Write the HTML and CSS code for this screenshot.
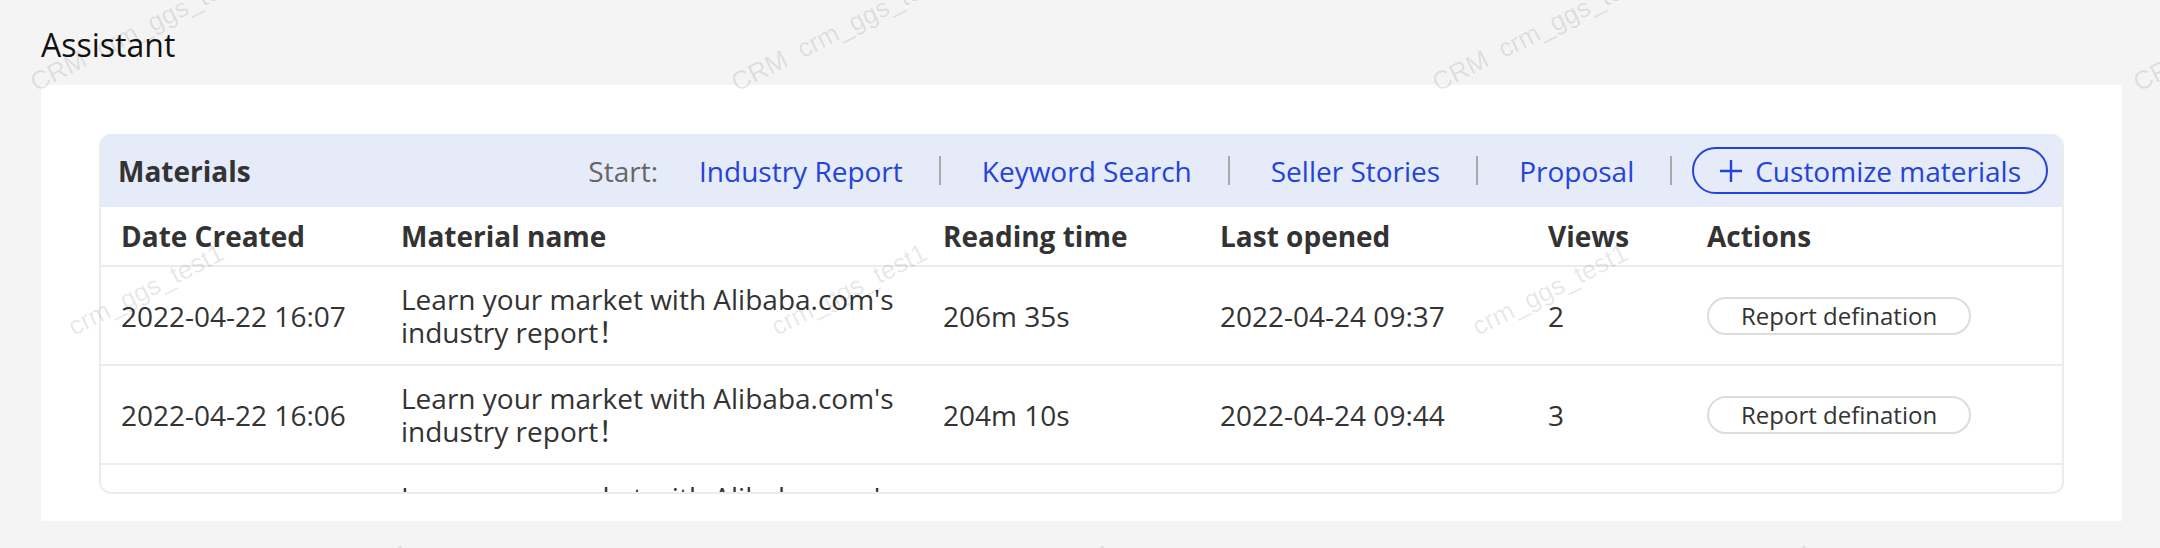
FILE: index.html
```html
<!DOCTYPE html>
<html lang="en">
<head>
  <meta charset="UTF-8">
  <meta name="viewport" content="width=device-width, initial-scale=1.0">
  <title>Assistant</title>
  <link rel="stylesheet" href="styles.css">
</head>
<body>
  <div class="page">
    <h1 class="title">Assistant</h1>

    <div class="card">
      <div class="panel">
        <div class="panel-head">
          <span class="panel-name">Materials</span>
          <div class="starts">
            <span class="start">Start:</span>
            <a class="link">Industry Report</a>
            <span class="sep"></span>
            <a class="link">Keyword Search</a>
            <span class="sep"></span>
            <a class="link">Seller Stories</a>
            <span class="sep"></span>
            <a class="link">Proposal</a>
            <span class="sep last"></span>
            <button class="custom">
              <svg width="24" height="24" viewBox="0 0 24 24"><path d="M12 1v22M1 12h22" stroke="currentColor" stroke-width="2.4" fill="none"/></svg>
              Customize materials
            </button>
          </div>
        </div>

        <table class="list">
          <colgroup>
            <col style="width:278px">
            <col style="width:542px">
            <col style="width:277px">
            <col style="width:328px">
            <col style="width:159px">
            <col>
          </colgroup>
          <thead>
            <tr>
              <th>Date Created</th>
              <th>Material name</th>
              <th>Reading time</th>
              <th>Last opened</th>
              <th>Views</th>
              <th>Actions</th>
            </tr>
          </thead>
          <tbody>
            <tr>
              <td>2022-04-22 16:07</td>
              <td class="name">Learn your market with Alibaba.com's industry report！</td>
              <td>206m 35s</td>
              <td>2022-04-24 09:37</td>
              <td>2</td>
              <td><button class="action">Report defination</button></td>
            </tr>
            <tr>
              <td>2022-04-22 16:06</td>
              <td class="name">Learn your market with Alibaba.com's industry report！</td>
              <td>204m 10s</td>
              <td>2022-04-24 09:44</td>
              <td>3</td>
              <td><button class="action">Report defination</button></td>
            </tr>
            <tr>
              <td>2022-04-22 16:05</td>
              <td class="name">Learn your market with Alibaba.com's industry report！</td>
              <td>198m 02s</td>
              <td>2022-04-24 09:50</td>
              <td>1</td>
              <td><button class="action">Report defination</button></td>
            </tr>
          </tbody>
        </table>
      </div>
    </div>
  </div>

  <!-- watermark layer -->
  <div class="marks">
    <span class="mark" style="left:36px;top:70px">CRM&nbsp;&nbsp;crm_ggs_test1</span>
    <span class="mark" style="left:737px;top:70px">CRM&nbsp;&nbsp;crm_ggs_test1</span>
    <span class="mark" style="left:1438px;top:70px">CRM&nbsp;&nbsp;crm_ggs_test1</span>
    <span class="mark" style="left:2139px;top:70px">CRM&nbsp;&nbsp;crm_ggs_test1</span>
    <span class="mark" style="left:74px;top:314px">crm_ggs_test1</span>
    <span class="mark" style="left:777px;top:314px">crm_ggs_test1</span>
    <span class="mark" style="left:1478px;top:314px">crm_ggs_test1</span>
    <span class="mark" style="left:262px;top:614px">crm_ggs_test1</span>
    <span class="mark" style="left:964px;top:614px">crm_ggs_test1</span>
    <span class="mark" style="left:1666px;top:614px">crm_ggs_test1</span>
  </div>
</body>
</html>
```

FILE: styles.css
```css
*{
  margin:0;
  padding:0;
  box-sizing: border-box;
}
body{
  position: relative;
  height: 548px;
  overflow: hidden;
  background-color: #f4f4f4;
  font-family: "Open Sans", "Noto Sans CJK SC", sans-serif;
  color: #333;
}

.page{
  padding: 23px 38px 27px 41px;
}
.title{
  font-size: 32px;
  font-weight: 400;
  line-height: 44px;
  color: #111;
  margin-bottom: 18px;
}

.card{
  background-color: #fff;
  padding: 49px 58px 27px 58px;
}

.panel{
  height: 360px;
  overflow: hidden;
  border: 2px solid #ececec;
  border-top: 0;
  border-radius: 12px;
}

.panel-head{
  display: flex;
  justify-content: space-between;
  align-items: center;
  height: 73px;
  padding: 0 14px 0 17px;
  background-color: #e5ebf8;
  font-size: 28px;
}
.panel-name{
  font-weight: 700;
  color: #333;
}
.starts{
  display: flex;
  align-items: center;
}
.start{
  color: #666;
  margin-right: 41px;
}
.link{
  color: #2443d9;
  cursor: pointer;
}
.sep{
  width: 2px;
  height: 29px;
  background-color: #aaa;
  margin: 0 41px 0 36px;
  &.last{ margin-right: 20px; }
}
.custom{
  display: flex;
  align-items: center;
  gap: 12px;
  height: 47px;
  padding: 0 25px 0 25px;
  border: 2px solid #2443d9;
  border-radius: 24px;
  background: transparent;
  color: #2443d9;
  font-family: inherit;
  font-size: 28px;
}

.list{
  width: 100%;
  border-collapse: collapse;
  table-layout: fixed;
  font-size: 28px;
  line-height: 33px;

  th{
    text-align: left;
    font-weight: 700;
    padding: 13px 10px 12px 22px;
    border-bottom: 2px solid #ececec;
  }
  td{
    padding: 16px 10px 15px 22px;
    border-bottom: 2px solid #ececec;
    vertical-align: middle;
  }
  th:first-child, td:first-child{
    padding-left: 20px;
  }
}

.action{
  height: 38px;
  padding: 0 32px;
  border: 2px solid #dcdcdc;
  border-radius: 19px;
  background-color: #fff;
  color: #333;
  font-family: inherit;
  font-size: 24px;
  line-height: 34px;
}

.marks{
  position: absolute;
  inset: 0;
  pointer-events: none;
}
.mark{
  position: absolute;
  white-space: nowrap;
  font-family: "Liberation Sans", sans-serif;
  font-size: 26px;
  line-height: 26px;
  color: rgba(0,0,0,0.1);
  transform-origin: 0 22px;
  transform: rotate(-27deg);
}
```
